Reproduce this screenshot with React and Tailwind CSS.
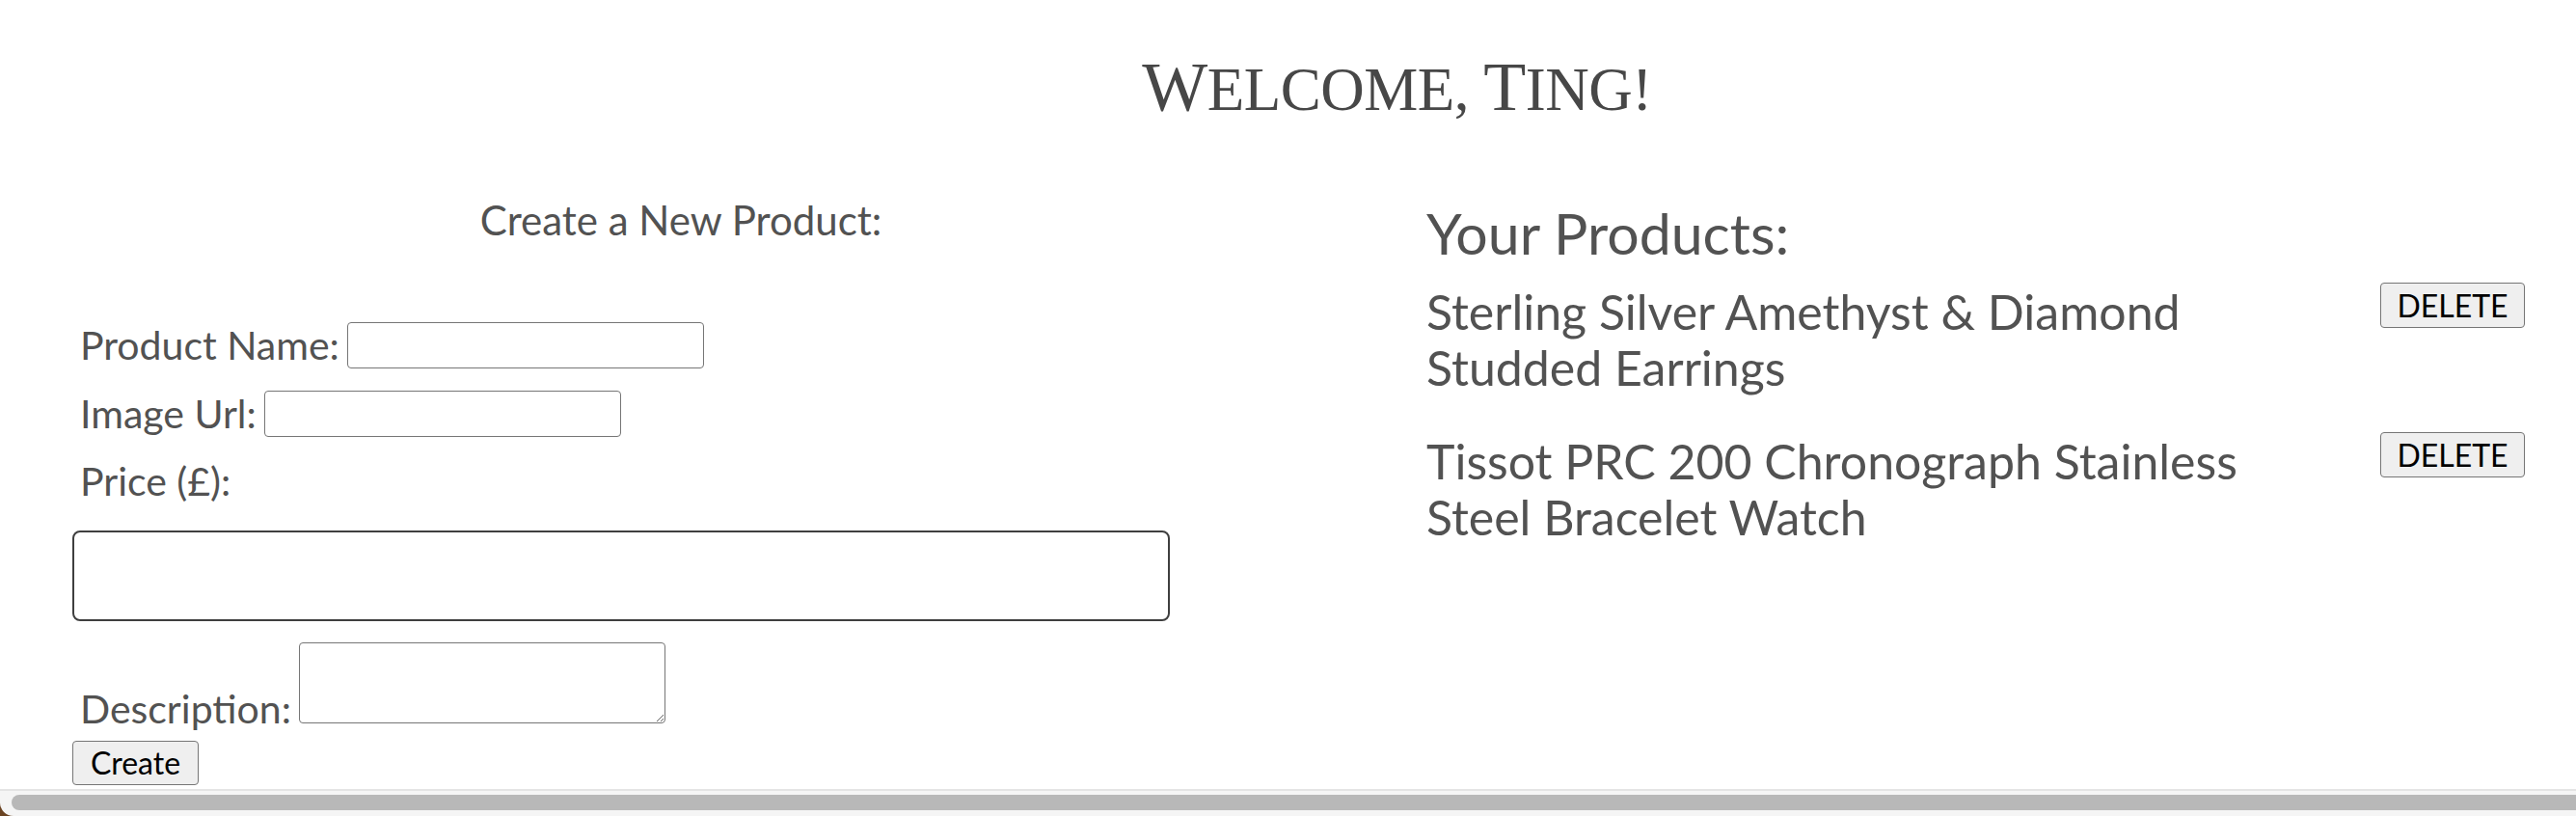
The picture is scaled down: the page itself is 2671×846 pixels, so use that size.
export default function App() {
  const body = { fontFamily: 'Lato, "Open Sans", sans-serif' };
  const serif = { fontFamily: '"Liberation Serif", "DejaVu Serif", serif' };

  const products = [
    ['Sterling Silver Amethyst & Diamond', 'Studded Earrings'],
    ['Tissot PRC 200 Chronograph Stainless', 'Steel Bracelet Watch'],
  ];

  return (
    <div className="w-[2671px] h-[846px] overflow-hidden bg-white text-[#525252]" style={body}>
      <div className="h-[818px] overflow-hidden">
        {/* heading */}
        <div className="flex justify-center pl-[226px] pt-[49px]">
          <h1 className="h-[82px] leading-[82px] text-[#474747] tracking-[-0.5px]" style={serif}>
            <span className="text-[72px]">W</span>
            <span className="text-[63px]">ELCOME, </span>
            <span className="text-[72px]">T</span>
            <span className="text-[63px]">ING!</span>
          </h1>
        </div>

        <div className="flex">
          {/* create form */}
          <div className="w-[1412px] shrink-0">
            <p className="mt-[73px] text-center text-[42px] leading-[48px]">Create a New Product:</p>

            <div className="pl-[75px]">
              <div className="mt-[82px] flex items-center">
                <label className="ml-[8px] mr-[8px] text-[41px] leading-[48px]">Product Name:</label>
                <input className="w-[370px] h-[48px] rounded-[4px] border border-[#767676] bg-white" />
              </div>
              <div className="mt-[23px] flex items-center">
                <label className="ml-[8px] mr-[8px] text-[41px] leading-[48px]">Image Url:</label>
                <input className="w-[370px] h-[48px] rounded-[4px] border border-[#767676] bg-white" />
              </div>
              <p className="mt-[22px] ml-[8px] text-[41px] leading-[48px]">Price (£):</p>
              <input className="mt-[27px] block w-[1138px] h-[94px] rounded-[8px] border-2 border-[#3f3f3f] bg-white" />
              <div className="mt-[22px] flex items-end">
                <label className="ml-[8px] mr-[8px] text-[41px] leading-[30px]">Description:</label>
                <textarea className="w-[380px] h-[84px] rounded-[4px] border border-[#767676] bg-white" />
              </div>
              <button className="mt-[18px] block w-[131px] h-[46px] rounded-[4px] border border-[#767676] bg-[#efefef] text-black text-[32px] leading-[40px]">
                Create
              </button>
            </div>
          </div>

          {/* product list */}
          <div className="ml-[67px] w-[1139px] shrink-0">
            <p className="mt-[79px] text-[59px] leading-[64px]">Your Products:</p>
            <div className="mt-[19px] flex flex-col gap-[38px]">
              {products.map((lines) => (
                <div key={lines[0]} className="flex justify-between items-start">
                  <p className="mt-[1px] text-[50px] leading-[58px]">
                    {lines[0]}
                    <br />
                    {lines[1]}
                  </p>
                  <button className="w-[150px] h-[47px] rounded-[4px] border border-[#767676] bg-[#efefef] text-black text-[32px] leading-[40px]">
                    DELETE
                  </button>
                </div>
              ))}
            </div>
          </div>
        </div>
      </div>

      {/* horizontal scrollbar */}
      <div className="h-[28px] bg-[#6b4423]">
        <div className="h-full rounded-bl-[14px] border-t-2 border-[#e4e4e4] bg-[#f5f5f5] pt-[4px] pl-[12px]">
          <div className="h-[16px] w-[2680px] rounded-full bg-[#b8b8b8]" />
        </div>
      </div>
    </div>
  );
}
